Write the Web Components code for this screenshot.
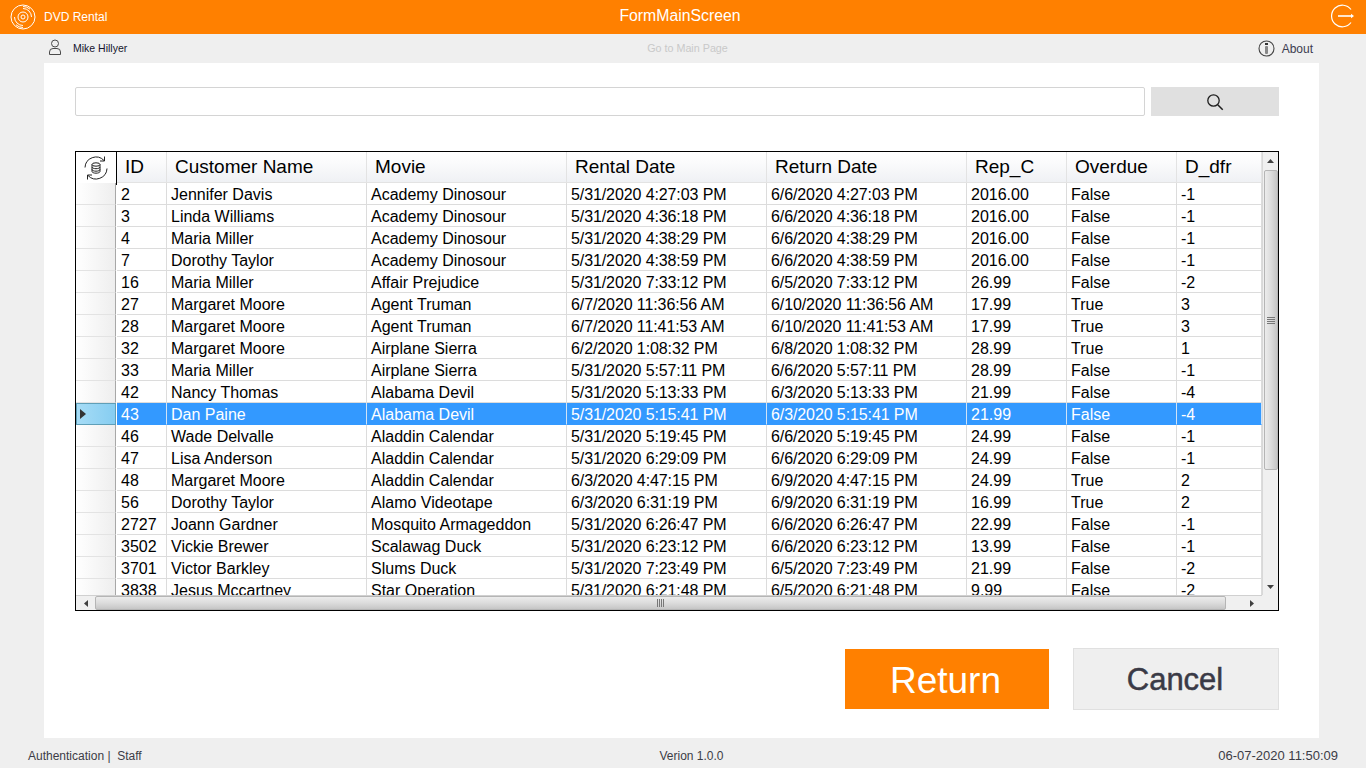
<!DOCTYPE html>
<html>
<head>
<meta charset="utf-8">
<title>DVD Rental</title>
<style>
html, body { margin: 0; height: 100%; overflow: hidden; }
body { font-family: "Liberation Sans", Arial, sans-serif; background: #efefef; }
</style>
</head>
<body>
<app-shell>
    <top-bar slot="top" brand="DVD Rental" caption="FormMainScreen"></top-bar>
    <user-bar slot="top" user="Mike Hillyer" link="Go to Main Page"></user-bar>
    <search-box></search-box>
    <rental-grid></rental-grid>
    <action-bar></action-bar>
    <status-bar slot="bottom" left="Authentication |&#160; Staff" middle="Verion 1.0.0" right="06-07-2020 11:50:09"></status-bar>
</app-shell>
<script>
class appShell extends HTMLElement {
    constructor() {
        super();
        this.attachShadow({ mode: "open" });
        this.shadowRoot.innerHTML = `
        <style>
        :host { display: flex; flex-direction: column; width: 1366px; height: 768px; }
        .panel {
            flex: 1;
            display: flex;
            flex-direction: column;
            margin: 0 47px 0 44px;
            padding: 24px 40px 0 31px;
            background: #ffffff;
        }
        </style>
        <slot name="top"></slot>
        <div class="panel"><slot></slot></div>
        <slot name="bottom"></slot>
        `;
    }
}
customElements.define("app-shell", appShell);

class topBar extends HTMLElement {
    constructor() {
        super();
        this.attachShadow({ mode: "open" });
        this.shadowRoot.innerHTML = `
        <style>
        :host { display: grid; grid-template-columns: 1fr auto 1fr; align-items: center; height: 34px; background: #ff8000; color: #ffffff; }
        .marca { display: flex; align-items: center; padding-left: 10px; font-size: 12px; }
        .marca svg { margin-right: 8px; }
        .titulo { font-size: 15.8px; padding-right: 6px; margin-bottom: 2px; }
        .salir { justify-self: end; display: flex; padding-right: 11px; margin-bottom: 2px; }
        </style>
        <div class="marca">
            <svg width="26" height="26" viewBox="0 0 26 26" fill="none" stroke="#fff" stroke-width="1">
                <circle cx="13" cy="13" r="12"/>
                <circle cx="13" cy="13" r="5"/>
                <circle cx="13" cy="13" r="2"/>
                <path d="M13 4.500a8.500 8.500 0 0 1 8.500 8.500M13 21.500a8.500 8.500 0 0 1-8.500-8.500M13 2.500a10.500 10.500 0 0 1 7 2.700M13 23.500a10.500 10.500 0 0 1-7-2.700"/>
            </svg>
            <span class="nombre"></span>
        </div>
        <div class="titulo"></div>
        <div class="salir">
            <svg width="24" height="24" viewBox="0 0 24 24" fill="none" stroke="#fff" stroke-width="1.2">
                <path d="M20 18.500A10.800 10.800 0 1 1 20 5.500"/>
                <path d="M7 12h13" stroke-width="1.600"/>
                <path d="M20 9.800l3 2.200-3 2.200z" fill="#fff" stroke="none"/>
            </svg>
        </div>
        `;
    }
    connectedCallback() {
        this.shadowRoot.querySelector(".nombre").textContent = this.getAttribute("brand");
        this.shadowRoot.querySelector(".titulo").textContent = this.getAttribute("caption");
    }
}
customElements.define("top-bar", topBar);

class userBar extends HTMLElement {
    constructor() {
        super();
        this.attachShadow({ mode: "open" });
        this.shadowRoot.innerHTML = `
        <style>
        :host { display: grid; grid-template-columns: 1fr auto 1fr; align-items: center; height: 29px; background: #efefef; font-size: 10.5px; }
        .usuario { display: flex; align-items: center; padding-left: 48px; color: #15152e; }
        .usuario svg { margin: -4px 11px 0 0; }
        .usuario span { padding-bottom: 2px; }
        .enlace { color: #c9c9c9; font-size: 10.75px; padding-left: 9px; padding-bottom: 2px; }
        .about { justify-self: end; display: flex; align-items: center; padding-right: 53px; font-size: 12px; color: #3c3c50; }
        .about svg { margin-right: 7px; }
        </style>
        <div class="usuario">
            <svg width="14" height="16" viewBox="0 0 14 16" fill="none" stroke="#4a4a4a" stroke-width="1">
                <circle cx="7" cy="4.500" r="3.500"/>
                <path d="M1.500 15.500v-2.500a3.500 3.500 0 0 1 3.500-3.500h4a3.500 3.500 0 0 1 3.500 3.500v2.500z"/>
            </svg>
            <span class="nombre"></span>
        </div>
        <div class="enlace"></div>
        <div class="about">
            <svg width="17" height="17" viewBox="0 0 17 17" fill="none">
                <circle cx="8.500" cy="8.500" r="7.500" stroke="#444" stroke-width="1.100"/>
                <rect x="7" y="3" width="3" height="2" fill="#333"/>
                <rect x="7" y="6" width="3" height="8" rx="1" fill="#888"/>
            </svg>
            <span>About</span>
        </div>
        `;
    }
    connectedCallback() {
        this.shadowRoot.querySelector(".nombre").textContent = this.getAttribute("user");
        this.shadowRoot.querySelector(".enlace").textContent = this.getAttribute("link");
    }
}
customElements.define("user-bar", userBar);

class searchBox extends HTMLElement {
    constructor() {
        super();
        this.attachShadow({ mode: "open" });
        this.shadowRoot.innerHTML = `
        <style>
        :host { display: flex; gap: 6px; height: 29px; }
        .campo { flex: 1; box-sizing: border-box; border: 1px solid #d4d4d4; border-radius: 2px; background: #ffffff; }
        .boton { width: 128px; display: flex; align-items: center; justify-content: center; background: #e0e0e0; }
        </style>
        <div class="campo"></div>
        <div class="boton">
            <svg width="18" height="18" viewBox="0 0 18 18" fill="none" stroke="#1e1e1e">
                <circle cx="7.500" cy="7.500" r="5.700" stroke-width="1.300"/>
                <path d="M11.700 11.700l5 5" stroke-width="1.500"/>
            </svg>
        </div>
        `;
    }
}
customElements.define("search-box", searchBox);

// anchos de columna tal como salen en la grilla
const COLUMNAS = [
    ["ID", 50], ["Customer Name", 200], ["Movie", 200], ["Rental Date", 200],
    ["Return Date", 200], ["Rep_C", 100], ["Overdue", 110], ["D_dfr", 85]
];
const FILAS = [
    ["2", "Jennifer Davis", "Academy Dinosour", "5/31/2020 4:27:03 PM", "6/6/2020 4:27:03 PM", "2016.00", "False", "-1"],
    ["3", "Linda Williams", "Academy Dinosour", "5/31/2020 4:36:18 PM", "6/6/2020 4:36:18 PM", "2016.00", "False", "-1"],
    ["4", "Maria Miller", "Academy Dinosour", "5/31/2020 4:38:29 PM", "6/6/2020 4:38:29 PM", "2016.00", "False", "-1"],
    ["7", "Dorothy Taylor", "Academy Dinosour", "5/31/2020 4:38:59 PM", "6/6/2020 4:38:59 PM", "2016.00", "False", "-1"],
    ["16", "Maria Miller", "Affair Prejudice", "5/31/2020 7:33:12 PM", "6/5/2020 7:33:12 PM", "26.99", "False", "-2"],
    ["27", "Margaret Moore", "Agent Truman", "6/7/2020 11:36:56 AM", "6/10/2020 11:36:56 AM", "17.99", "True", "3"],
    ["28", "Margaret Moore", "Agent Truman", "6/7/2020 11:41:53 AM", "6/10/2020 11:41:53 AM", "17.99", "True", "3"],
    ["32", "Margaret Moore", "Airplane Sierra", "6/2/2020 1:08:32 PM", "6/8/2020 1:08:32 PM", "28.99", "True", "1"],
    ["33", "Maria Miller", "Airplane Sierra", "5/31/2020 5:57:11 PM", "6/6/2020 5:57:11 PM", "28.99", "False", "-1"],
    ["42", "Nancy Thomas", "Alabama Devil", "5/31/2020 5:13:33 PM", "6/3/2020 5:13:33 PM", "21.99", "False", "-4"],
    ["43", "Dan Paine", "Alabama Devil", "5/31/2020 5:15:41 PM", "6/3/2020 5:15:41 PM", "21.99", "False", "-4"],
    ["46", "Wade Delvalle", "Aladdin Calendar", "5/31/2020 5:19:45 PM", "6/6/2020 5:19:45 PM", "24.99", "False", "-1"],
    ["47", "Lisa Anderson", "Aladdin Calendar", "5/31/2020 6:29:09 PM", "6/6/2020 6:29:09 PM", "24.99", "False", "-1"],
    ["48", "Margaret Moore", "Aladdin Calendar", "6/3/2020 4:47:15 PM", "6/9/2020 4:47:15 PM", "24.99", "True", "2"],
    ["56", "Dorothy Taylor", "Alamo Videotape", "6/3/2020 6:31:19 PM", "6/9/2020 6:31:19 PM", "16.99", "True", "2"],
    ["2727", "Joann Gardner", "Mosquito Armageddon", "5/31/2020 6:26:47 PM", "6/6/2020 6:26:47 PM", "22.99", "False", "-1"],
    ["3502", "Vickie Brewer", "Scalawag Duck", "5/31/2020 6:23:12 PM", "6/6/2020 6:23:12 PM", "13.99", "False", "-1"],
    ["3701", "Victor Barkley", "Slums Duck", "5/31/2020 7:23:49 PM", "6/5/2020 7:23:49 PM", "21.99", "False", "-2"],
    ["3838", "Jesus Mccartney", "Star Operation", "5/31/2020 6:21:48 PM", "6/5/2020 6:21:48 PM", "9.99", "False", "-2"]
];
const FILA_ACTIVA = 10;

class rentalGrid extends HTMLElement {
    constructor() {
        super();
        this.attachShadow({ mode: "open" });
        const plantilla = COLUMNAS.map(c => c[1] + "px").join(" ");
        this.shadowRoot.innerHTML = `
        <style>
        :host {
            display: grid;
            grid-template-columns: 1186px 16px;
            grid-template-rows: 443px 15px;
            margin-top: 35px;
            width: 1204px;
            border: 1px solid #000000;
            box-sizing: border-box;
            height: 460px;
            background: #f0f0f0;
            color: #000000;
        }
        .tabla { display: flex; flex-direction: column; overflow: hidden; background: #ffffff; }
        .cabecera { display: flex; height: 32px; flex: none; }
        .esquina {
            width: 40px; flex: none; height: 32px; box-sizing: content-box;
            border-right: 1px solid #000; border-bottom: 1px solid #000;
            display: flex; align-items: center; justify-content: center; background: #fff;
            margin-bottom: -1px;
        }
        .titulos {
            display: grid; grid-template-columns: ${plantilla}; height: 30px; margin-top: 0;
            border-bottom: 1px solid #e3e3e3;
            background: linear-gradient(#ffffff 0%, #fbfbfc 35%, #eff1f4 100%);
        }
        .titulos div { padding-left: 8px; font-size: 19px; line-height: 30px; border-right: 1px solid #e3e3e3; box-sizing: border-box; white-space: nowrap; }
        .cuerpo { flex: 1; overflow: hidden; margin-top: -1px; }
        .fila { display: flex; height: 22px; flex: none; }
        .lateral {
            width: 40px; flex: none; box-sizing: border-box; border-bottom: 1px solid #e3e3e3;
            border-right: 1px solid #a8a8a8; margin-right: 1px;
            background: linear-gradient(90deg, #ffffff 0%, #fbfbfb 25%, #eeeeee 100%);
            display: flex; align-items: center;
        }
        .celdas { display: grid; grid-template-columns: ${plantilla}; }
        .celdas div { height: 22px; padding-left: 4px; font-size: 16px; line-height: 23px; box-sizing: border-box; border-right: 1px solid #dcdcdc; border-bottom: 1px solid #dcdcdc; white-space: nowrap; overflow: hidden; }
        .celdas div:nth-child(4), .celdas div:nth-child(5) { letter-spacing: -0.1px; }
        .activa .celdas div { background: #3399ff; color: #ffffff; border-right-color: #cfe3f7; border-bottom-color: #3399ff; }
        .activa .lateral { background: linear-gradient(90deg, #a6dcf6, #86cdf1); border: 1px solid #5f9fb8; border-right-color: #5f9fb8; }
        .activa .lateral svg { margin-left: 3px; }
        .barraV { display: flex; flex-direction: column; align-items: center; background: #f0f0f0; border-left: 1px solid #d8d8d8; box-sizing: border-box; }
        .barraH { display: flex; align-items: center; background: #f0f0f0; border-top: 1px solid #d0d0d0; box-sizing: border-box; }
        .flecha { flex: none; display: flex; align-items: center; justify-content: center; }
        .barraV .flecha { height: 17px; width: 15px; }
        .barraH .flecha { width: 16px; height: 14px; }
        .pulgarV {
            width: 14px; height: 300px; margin-top: 1px; flex: none; box-sizing: border-box; border: 1px solid #b5b5b5; border-radius: 2px;
            background: linear-gradient(90deg, #ececec, #dcdcdc 50%, #c6c6c6);
            display: flex; align-items: center; justify-content: center;
        }
        .pulgarH {
            width: 1131px; height: 14px; flex: none; box-sizing: border-box; border: 1px solid #b5b5b5; border-radius: 2px;
            background: linear-gradient(#ececec, #dcdcdc 50%, #c6c6c6);
            display: flex; align-items: center; justify-content: center;
        }
        .hueco { flex: 1; }
        .esq { background: #f0f0f0; }
        </style>
        <div class="tabla">
            <div class="cabecera">
                <div class="esquina">
                    <svg width="26" height="26" viewBox="0 0 26 26" fill="none" stroke="#222" stroke-width="1">
                        <ellipse cx="13" cy="9.500" rx="4" ry="1.700"/>
                        <path d="M9 9.500v7c0 .9 1.800 1.700 4 1.700s4-.8 4-1.700v-7M9 12c0 .9 1.800 1.700 4 1.700s4-.8 4-1.700M9 14.500c0 .9 1.800 1.700 4 1.700s4-.8 4-1.700"/>
                        <path d="M2 12.500A11 11 0 0 1 21 5.500"/>
                        <path d="M21.500 1.500v4.500h-4.500"/>
                        <path d="M24 13.500A11 11 0 0 1 5 20.500"/>
                        <path d="M4.500 24.500v-4.500h4.500"/>
                    </svg>
                </div>
                <div class="titulos"></div>
            </div>
            <div class="cuerpo"></div>
        </div>
        <div class="barraV">
            <div class="flecha"><svg width="7" height="4" viewBox="0 0 7 4"><path d="M3.500 0L7 4H0z" fill="#404040"/></svg></div>
            <div class="pulgarV"><svg width="8" height="7" viewBox="0 0 8 7"><path d="M0 .5h8M0 2.500h8M0 4.500h8M0 6.500h8" stroke="#777" fill="none"/></svg></div>
            <div class="hueco"></div>
            <div class="flecha"><svg width="7" height="4" viewBox="0 0 7 4"><path d="M0 0h7L3.500 4z" fill="#404040"/></svg></div>
        </div>
        <div class="barraH">
            <div class="flecha" style="width:19px"><svg width="4" height="7" viewBox="0 0 4 7"><path d="M4 0v7L0 3.500z" fill="#404040"/></svg></div>
            <div class="pulgarH"><svg width="7" height="8" viewBox="0 0 7 8"><path d="M.5 0v8M2.500 0v8M4.500 0v8M6.500 0v8" stroke="#777" fill="none"/></svg></div>
            <div class="hueco"></div>
            <div class="flecha" style="width:20px"><svg width="4" height="7" viewBox="0 0 4 7"><path d="M0 0v7l4-3.500z" fill="#404040"/></svg></div>
        </div>
        <div class="esq"></div>
        `;
    }
    connectedCallback() {
        const titulos = this.shadowRoot.querySelector(".titulos");
        COLUMNAS.forEach(c => {
            const celda = document.createElement("div");
            celda.textContent = c[0];
            titulos.appendChild(celda);
        });
        const cuerpo = this.shadowRoot.querySelector(".cuerpo");
        FILAS.forEach((f, i) => {
            const fila = document.createElement("div");
            fila.className = i === FILA_ACTIVA ? "fila activa" : "fila";
            const lateral = document.createElement("div");
            lateral.className = "lateral";
            if (i === FILA_ACTIVA) {
                lateral.innerHTML = `<svg width="6" height="10" viewBox="0 0 6 10"><path d="M0 0l6 5-6 5z" fill="#333"/></svg>`;
            }
            fila.appendChild(lateral);
            const celdas = document.createElement("div");
            celdas.className = "celdas";
            f.forEach(v => {
                const celda = document.createElement("div");
                celda.textContent = v;
                celdas.appendChild(celda);
            });
            fila.appendChild(celdas);
            cuerpo.appendChild(fila);
        });
    }
}
customElements.define("rental-grid", rentalGrid);

class actionBar extends HTMLElement {
    constructor() {
        super();
        this.attachShadow({ mode: "open" });
        this.shadowRoot.innerHTML = `
        <style>
        :host { display: flex; justify-content: flex-end; align-items: center; gap: 24px; margin-top: 37px; height: 62px; }
        div { display: flex; align-items: center; justify-content: center; box-sizing: border-box; }
        .volver { width: 204px; height: 60px; padding: 3px 3px 0 0; background: #ff8000; color: #ffffff; font-size: 37px; }
        .cancelar { width: 206px; height: 62px; padding: 2px 2px 0 0; background: #efefef; border: 1px solid #e0e0e0; color: #3a3a46; font-size: 31px; -webkit-text-stroke: 0.5px #3a3a46; }
        </style>
        <div class="volver">Return</div>
        <div class="cancelar">Cancel</div>
        `;
    }
}
customElements.define("action-bar", actionBar);

class statusBar extends HTMLElement {
    constructor() {
        super();
        this.attachShadow({ mode: "open" });
        this.shadowRoot.innerHTML = `
        <style>
        :host { display: grid; grid-template-columns: 1fr auto 1fr; align-items: center; height: 30px; padding: 5px 28px 0; box-sizing: border-box; background: #efefef; font-size: 12px; color: #3c3c46; }
        .med { padding-left: 17px; }
        .der { justify-self: end; font-size: 13px; }
        </style>
        <div class="izq"></div><div class="med"></div><div class="der"></div>
        `;
    }
    connectedCallback() {
        this.shadowRoot.querySelector(".izq").textContent = this.getAttribute("left");
        this.shadowRoot.querySelector(".med").textContent = this.getAttribute("middle");
        this.shadowRoot.querySelector(".der").textContent = this.getAttribute("right");
    }
}
customElements.define("status-bar", statusBar);
</script>
</body>
</html>
